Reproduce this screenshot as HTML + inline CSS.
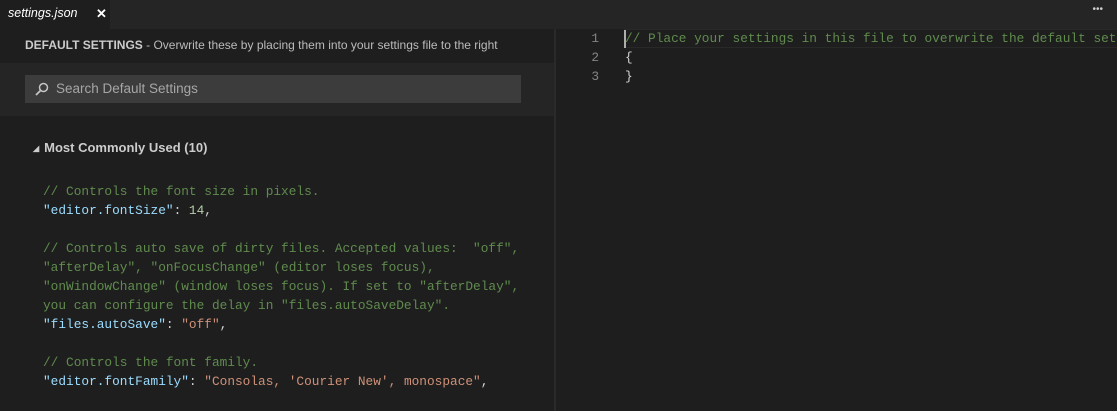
<!DOCTYPE html>
<html><head><style>
*{margin:0;padding:0;box-sizing:border-box}
body{width:1117px;height:411px;background:#1e1e1e;overflow:hidden;position:relative;font-family:"Liberation Sans",sans-serif}
.tabbar{position:absolute;left:0;top:0;width:1117px;height:29px;background:#252526}
.tab{position:absolute;left:0;top:0;width:110px;height:29px;background:#1e1e1e;color:#fff;font-size:12.5px;font-style:italic;line-height:27px;padding-left:8px}
.tab .x{position:absolute;left:96px;top:0;font-style:normal;font-weight:bold;font-size:13px}
.dots{position:absolute;right:14px;top:4px;color:#ccc;font-size:10px}
.left{position:absolute;left:0;top:29px;width:554px;height:382px;background:#1e1e1e}
.hdr{position:absolute;left:25px;top:9px;font-size:12px;color:#bbb}
.hdr b{color:#ccc}
.sarea{position:absolute;left:0;top:34px;width:554px;height:53px;background:#252526}
.sbox{position:absolute;left:25px;top:12px;width:496px;height:28px;background:#3c3c3c;color:#a6a6a6;font-size:13.5px;line-height:28px;padding-left:31px}
.sbox svg{position:absolute;left:10px;top:7px}
.grp{position:absolute;left:33px;top:111px;color:#ccc;font-weight:bold;font-size:13px}
.grp span{font-size:8px;margin-right:5px;position:relative;top:-1px}
.code{position:absolute;font-family:"Liberation Mono",monospace;font-size:12.8px;line-height:19px;white-space:pre}
.c{color:#608b4e}.k{color:#9cdcfe}.n{color:#b5cea8}.s{color:#ce9178}.p{color:#d4d4d4}
.div{position:absolute;left:554px;top:29px;width:2px;height:382px;background:#2a2a2a}
.ln{position:absolute;left:585px;top:29px;color:#858585;font-family:"Liberation Mono",monospace;font-size:12.8px;line-height:19px;text-align:right;width:14px}
.cur{position:absolute;left:624px;top:29px;width:493px;height:19px;border-top:1px solid #282828;border-bottom:1px solid #282828}
.caret{position:absolute;left:624px;top:30px;width:2px;height:18px;background:#aeafad}
</style></head><body>
<div class="tabbar"><div class="tab">settings.json<span class="x">✕</span></div><div class="dots">•••</div></div>
<div class="left">
<div class="hdr"><b>DEFAULT SETTINGS</b> - Overwrite these by placing them into your settings file to the right</div>
<div class="sarea"><div class="sbox"><svg width="14" height="14" viewBox="0 0 14 14"><circle cx="8.5" cy="5.5" r="4" fill="none" stroke="#c5c5c5" stroke-width="1.5"/><line x1="5.5" y1="8.5" x2="1" y2="13" stroke="#c5c5c5" stroke-width="1.8"/></svg>Search Default Settings</div></div>
<div class="grp"><span>◢</span>Most Commonly Used (10)</div>
<div class="code" style="left:43px;top:153px"><span class="c">// Controls the font size in pixels.</span>
<span class="k">"editor.fontSize"</span><span class="p">: </span><span class="n">14</span><span class="p">,</span>

<span class="c">// Controls auto save of dirty files. Accepted values:  "off",
"afterDelay", "onFocusChange" (editor loses focus),
"onWindowChange" (window loses focus). If set to "afterDelay",
you can configure the delay in "files.autoSaveDelay".</span>
<span class="k">"files.autoSave"</span><span class="p">: </span><span class="s">"off"</span><span class="p">,</span>

<span class="c">// Controls the font family.</span>
<span class="k">"editor.fontFamily"</span><span class="p">: </span><span class="s">"Consolas, 'Courier New', monospace"</span><span class="p">,</span></div>
</div>
<div class="div"></div>
<div class="cur"></div>
<div class="ln">1<br>2<br>3</div>
<div class="code" style="left:625px;top:29px"><span class="c">// Place your settings in this file to overwrite the default settings</span>
<span class="p">{</span>
<span class="p">}</span></div>
<div class="caret"></div>
</body></html>
